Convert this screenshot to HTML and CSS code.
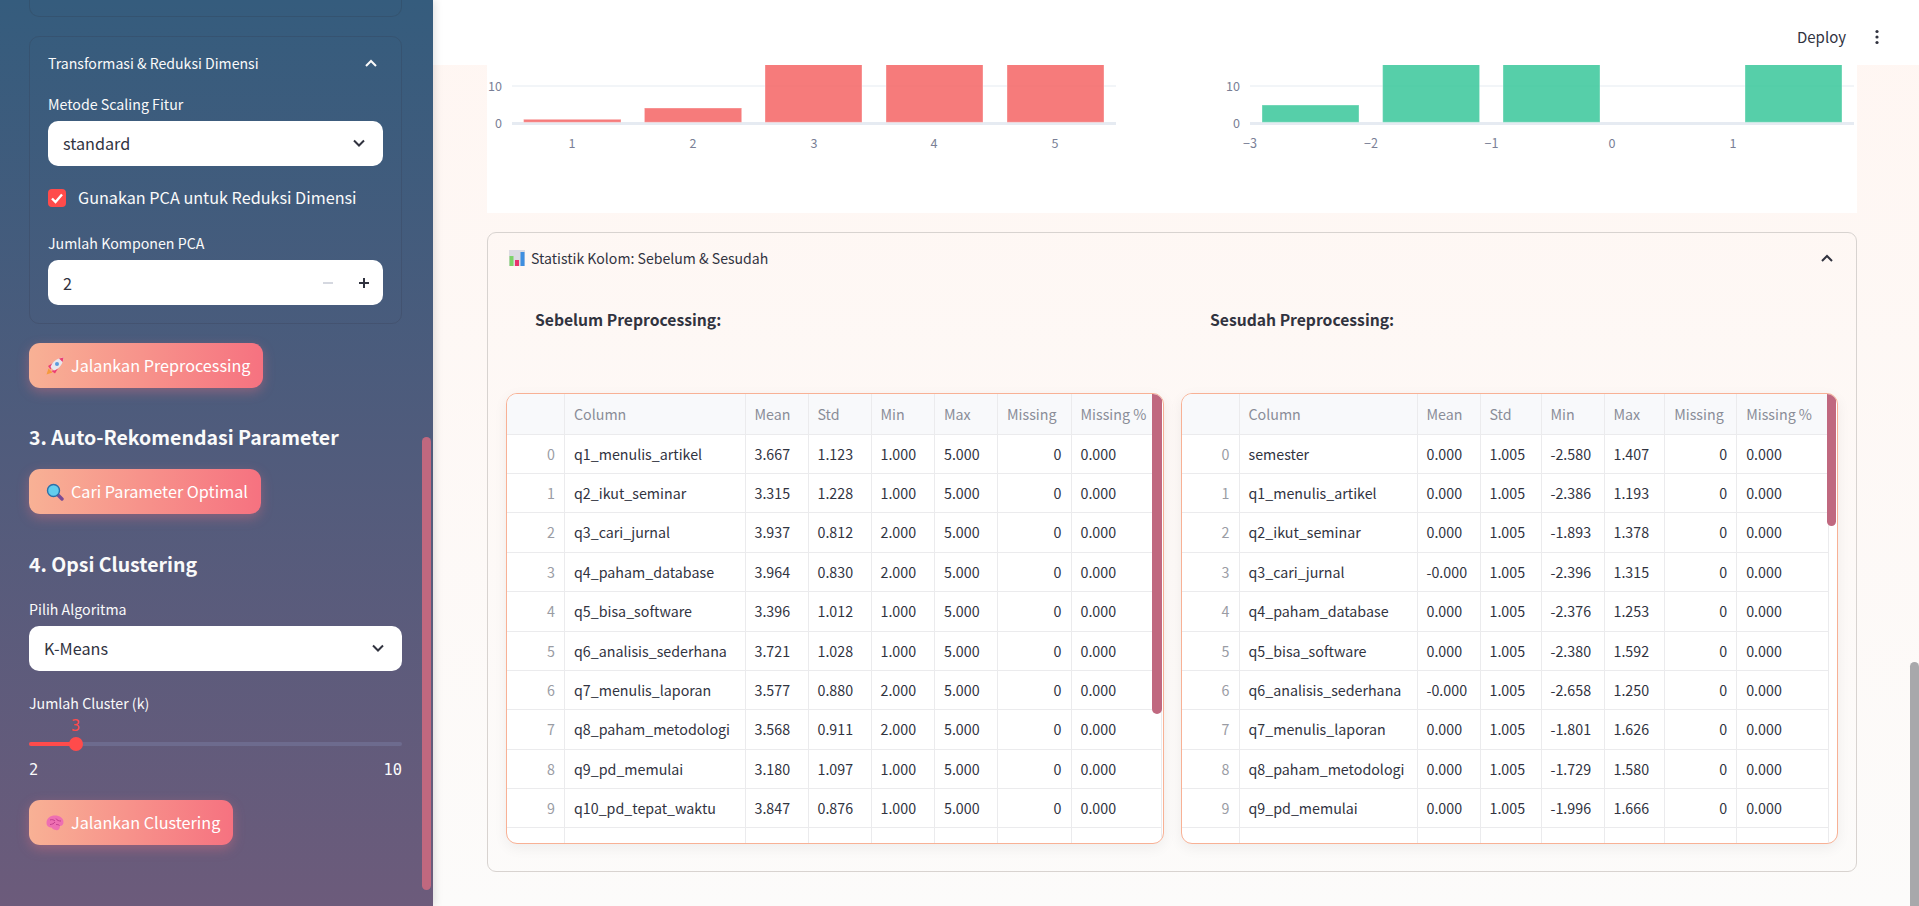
FILE: index.html
```html
<!DOCTYPE html>
<html lang="id">
<head>
  <meta charset="UTF-8" />
  <meta name="viewport" content="width=device-width, initial-scale=1.0" />
  <title>Preprocessing dan Clustering</title>
  <link rel="stylesheet" href="styles.css">
</head>
<body>
  <aside class="sidebar">
    <div class="side-box cut"></div>

    <div class="side-box">
      <div class="box-head">
        <span>Transformasi &amp; Reduksi Dimensi</span>
        <svg class="chev" viewBox="0 0 14 14"><path d="M2 10l5-5 5 5"/></svg>
      </div>
      <label class="field-label">Metode Scaling Fitur</label>
      <div class="select">
        <span>standard</span>
        <svg class="chev" viewBox="0 0 14 14"><path d="M2 4.5l5 5 5-5"/></svg>
      </div>
      <div class="check-row">
        <span class="check">
          <svg viewBox="0 0 18 18"><path d="M4 9.5l3.5 3.5L14 5.5"/></svg>
        </span>
        <span class="check-text">Gunakan PCA untuk Reduksi Dimensi</span>
      </div>
      <label class="field-label pca-label">Jumlah Komponen PCA</label>
      <div class="select number">
        <span>2</span>
        <span class="steps">
          <svg class="step off" viewBox="0 0 10 10"><path d="M0 5h10"/></svg>
          <svg class="step" viewBox="0 0 10 10"><path d="M0 5h10M5 0v10"/></svg>
        </span>
      </div>
    </div>

    <button class="run-btn btn-pre">
      <svg class="emoji" viewBox="0 0 18 18">
        <path d="M0.500 17.500l2-6 4 4z" fill="#f59a3c"/>
        <path d="M2 9l5-3-2.500 6.500zM9 16.500l3-5-6.500 2.500z" fill="#ec3f73"/>
        <path d="M4.500 10C6.500 4.500 11 1 17.500 0.500 17 7 13.500 11.500 8 13.500z" fill="#e9e6ec"/>
        <path d="M13 1.400l4.500-.9-.9 4.500z" fill="#ec3f73"/>
        <circle cx="11" cy="7" r="2" fill="#5b9bdc"/>
      </svg>
      <span>Jalankan Preprocessing</span>
    </button>

    <h3 class="side-title first">3. Auto-Rekomendasi Parameter</h3>
    <button class="run-btn btn-param">
      <svg class="emoji" viewBox="0 0 18 18">
        <path d="M11 11l5 5" stroke="#7a4a94" stroke-width="3.400" stroke-linecap="round"/>
        <circle cx="7.500" cy="7.500" r="6" fill="#62cdee" stroke="#2c6fa8" stroke-width="1.400"/>
      </svg>
      <span>Cari Parameter Optimal</span>
    </button>

    <h3 class="side-title second">4. Opsi Clustering</h3>
    <label class="field-label algo-label">Pilih Algoritma</label>
    <div class="select">
      <span>K-Means</span>
      <svg class="chev" viewBox="0 0 14 14"><path d="M2 4.500l5 5 5-5"/></svg>
    </div>
    <label class="field-label cluster-label">Jumlah Cluster (k)</label>
    <div class="slider-value">3</div>
    <div class="slider">
      <div class="slider-fill"></div>
      <div class="slider-thumb"></div>
    </div>
    <div class="slider-ends"><span>2</span><span>10</span></div>
    <button class="run-btn btn-cluster">
      <svg class="emoji" viewBox="0 0 18 18">
        <path d="M0.500 9c0-5 4-7.500 8.500-7.500s8.500 2.500 8.500 6.500c0 2.500-1.500 4-3.500 4 0 2.500-1.500 5-4 4-2 0-3.500-1-4.500-2.500-2.500 0-5-1.500-5-4.500z" fill="#ee6fb2"/>
        <path d="M4 6c2-1 4 0 5 1M10 4.500c1 2 3 2.500 5 2.500M4 10.500c2 0 4-1 5-2.500M10 10.500c1 0 2.500 0 3.500 1" fill="none" stroke="#c33f8e" stroke-width="1"/>
      </svg>
      <span>Jalankan Clustering</span>
    </button>

    <div class="side-scroll"></div>
  </aside>

  <main class="main">
    <header class="topbar">
      <span class="deploy">Deploy</span>
      <svg class="kebab" viewBox="0 0 4 16">
        <circle cx="2" cy="2.500" r="1.600"/>
        <circle cx="2" cy="8" r="1.600"/>
        <circle cx="2" cy="13.500" r="1.600"/>
      </svg>
    </header>

    <section class="charts">
      <svg class="chart" viewBox="0 0 685 148">
        <path class="grid-line" d="M25 21H629"/>
        <path class="zero-line" d="M25 58.500H629"/>
        <g class="bars-red">
          <rect x="36.600" y="54.300" width="97.400" height="3"/>
          <rect x="157.400" y="43" width="97.300" height="14.300"/>
          <rect x="278" y="-2" width="97" height="59.300"/>
          <rect x="399" y="-2" width="97" height="59.300"/>
          <rect x="520" y="-2" width="97" height="59.300"/>
        </g>
        <g class="tick y-tick">
          <text x="15" y="26">10</text>
          <text x="15" y="63">0</text>
        </g>
        <g class="tick x-tick">
          <text x="85" y="83">1</text>
          <text x="206" y="83">2</text>
          <text x="327" y="83">3</text>
          <text x="447" y="83">4</text>
          <text x="568" y="83">5</text>
        </g>
      </svg>
      <svg class="chart" viewBox="0 0 685 148">
        <path class="grid-line" d="M78 21H682"/>
        <path class="zero-line" d="M78 58.500H682"/>
        <g class="bars-green">
          <rect x="90" y="40" width="97" height="17.300"/>
          <rect x="210.600" y="-2" width="97" height="59.300"/>
          <rect x="331" y="-2" width="97" height="59.300"/>
          <rect x="573" y="-2" width="97" height="59.300"/>
        </g>
        <g class="tick y-tick">
          <text x="68" y="26">10</text>
          <text x="68" y="63">0</text>
        </g>
        <g class="tick x-tick">
          <text x="78" y="83">−3</text>
          <text x="199" y="83">−2</text>
          <text x="319.500" y="83">−1</text>
          <text x="440" y="83">0</text>
          <text x="561" y="83">1</text>
        </g>
      </svg>
    </section>

    <section class="expander">
      <div class="exp-head">
        <svg class="emoji small" viewBox="0 0 16 16">
          <rect x="0" y="0" width="16" height="16" fill="#dcdbe2"/>
          <rect x="0.500" y="6" width="4" height="10" fill="#7ed36a"/>
          <rect x="6" y="10" width="4" height="6" fill="#e8326e"/>
          <rect x="11.500" y="2" width="4" height="14" fill="#3f8fe0"/>
        </svg>
        <span class="exp-title">Statistik Kolom: Sebelum &amp; Sesudah</span>
        <svg class="chev dark" viewBox="0 0 14 14"><path d="M2 10l5-5 5 5"/></svg>
      </div>

      <div class="exp-subheads">
        <h4>Sebelum Preprocessing:</h4>
        <h4>Sesudah Preprocessing:</h4>
      </div>

      <div class="tables">
        <div class="table-box">
          <table class="grid-a">
            <thead>
              <tr><th></th><th>Column</th><th>Mean</th><th>Std</th><th>Min</th><th>Max</th><th>Missing</th><th>Missing %</th></tr>
            </thead>
            <tbody>
              <tr><td class="idx">0</td><td>q1_menulis_artikel</td><td>3.667</td><td>1.123</td><td>1.000</td><td>5.000</td><td class="num">0</td><td>0.000</td></tr>
              <tr><td class="idx">1</td><td>q2_ikut_seminar</td><td>3.315</td><td>1.228</td><td>1.000</td><td>5.000</td><td class="num">0</td><td>0.000</td></tr>
              <tr><td class="idx">2</td><td>q3_cari_jurnal</td><td>3.937</td><td>0.812</td><td>2.000</td><td>5.000</td><td class="num">0</td><td>0.000</td></tr>
              <tr><td class="idx">3</td><td>q4_paham_database</td><td>3.964</td><td>0.830</td><td>2.000</td><td>5.000</td><td class="num">0</td><td>0.000</td></tr>
              <tr><td class="idx">4</td><td>q5_bisa_software</td><td>3.396</td><td>1.012</td><td>1.000</td><td>5.000</td><td class="num">0</td><td>0.000</td></tr>
              <tr><td class="idx">5</td><td>q6_analisis_sederhana</td><td>3.721</td><td>1.028</td><td>1.000</td><td>5.000</td><td class="num">0</td><td>0.000</td></tr>
              <tr><td class="idx">6</td><td>q7_menulis_laporan</td><td>3.577</td><td>0.880</td><td>2.000</td><td>5.000</td><td class="num">0</td><td>0.000</td></tr>
              <tr><td class="idx">7</td><td>q8_paham_metodologi</td><td>3.568</td><td>0.911</td><td>2.000</td><td>5.000</td><td class="num">0</td><td>0.000</td></tr>
              <tr><td class="idx">8</td><td>q9_pd_memulai</td><td>3.180</td><td>1.097</td><td>1.000</td><td>5.000</td><td class="num">0</td><td>0.000</td></tr>
              <tr><td class="idx">9</td><td>q10_pd_tepat_waktu</td><td>3.847</td><td>0.876</td><td>1.000</td><td>5.000</td><td class="num">0</td><td>0.000</td></tr>
              <tr><td></td><td></td><td></td><td></td><td></td><td></td><td></td><td></td></tr>
            </tbody>
          </table>
          <div class="table-scroll long"></div>
        </div>

        <div class="table-box">
          <table class="grid-b">
            <thead>
              <tr><th></th><th>Column</th><th>Mean</th><th>Std</th><th>Min</th><th>Max</th><th>Missing</th><th>Missing %</th></tr>
            </thead>
            <tbody>
              <tr><td class="idx">0</td><td>semester</td><td>0.000</td><td>1.005</td><td>-2.580</td><td>1.407</td><td class="num">0</td><td>0.000</td></tr>
              <tr><td class="idx">1</td><td>q1_menulis_artikel</td><td>0.000</td><td>1.005</td><td>-2.386</td><td>1.193</td><td class="num">0</td><td>0.000</td></tr>
              <tr><td class="idx">2</td><td>q2_ikut_seminar</td><td>0.000</td><td>1.005</td><td>-1.893</td><td>1.378</td><td class="num">0</td><td>0.000</td></tr>
              <tr><td class="idx">3</td><td>q3_cari_jurnal</td><td>-0.000</td><td>1.005</td><td>-2.396</td><td>1.315</td><td class="num">0</td><td>0.000</td></tr>
              <tr><td class="idx">4</td><td>q4_paham_database</td><td>0.000</td><td>1.005</td><td>-2.376</td><td>1.253</td><td class="num">0</td><td>0.000</td></tr>
              <tr><td class="idx">5</td><td>q5_bisa_software</td><td>0.000</td><td>1.005</td><td>-2.380</td><td>1.592</td><td class="num">0</td><td>0.000</td></tr>
              <tr><td class="idx">6</td><td>q6_analisis_sederhana</td><td>-0.000</td><td>1.005</td><td>-2.658</td><td>1.250</td><td class="num">0</td><td>0.000</td></tr>
              <tr><td class="idx">7</td><td>q7_menulis_laporan</td><td>0.000</td><td>1.005</td><td>-1.801</td><td>1.626</td><td class="num">0</td><td>0.000</td></tr>
              <tr><td class="idx">8</td><td>q8_paham_metodologi</td><td>0.000</td><td>1.005</td><td>-1.729</td><td>1.580</td><td class="num">0</td><td>0.000</td></tr>
              <tr><td class="idx">9</td><td>q9_pd_memulai</td><td>0.000</td><td>1.005</td><td>-1.996</td><td>1.666</td><td class="num">0</td><td>0.000</td></tr>
              <tr><td></td><td></td><td></td><td></td><td></td><td></td><td></td><td></td></tr>
            </tbody>
          </table>
          <div class="table-scroll short"></div>
        </div>
      </div>
    </section>

    <div class="page-scroll"></div>
  </main>
</body>
</html>
```

FILE: styles.css
```css
* {
  box-sizing: border-box;
}
html, body {
  height: 100%;
}
body {
  margin: 0;
  display: flex;
  height: 906px;
  overflow: hidden;
  font-family: "Noto Sans CJK SC", "Noto Sans", sans-serif;
  color: #31333f;
}

/* sidebar */
.sidebar {
  position: relative;
  z-index: 2;
  flex: 0 0 433px;
  height: 906px;
  padding: 0 31px 0 29px;
  background: linear-gradient(180deg, #355c7d, #6c5b7b);
  box-shadow: 2px 0 8px rgba(0, 0, 0, 0.12);
  color: #fafafa;
}
.side-box {
  width: 373px;
  height: 288px;
  margin-top: 19px;
  padding: 13px 18px 0;
  border: 1px solid rgba(49, 51, 63, 0.2);
  border-radius: 10px;
}
.side-box.cut {
  height: 17px;
  margin-top: 0;
  padding: 0;
  border-top: none;
  border-radius: 0 0 10px 10px;
}
.box-head {
  display: flex;
  justify-content: space-between;
  align-items: center;
  height: 26px;
  padding-right: 5px;
  margin-bottom: 18px;
  font-size: 14.100px;
  line-height: 26px;
}
.chev {
  width: 14px;
  height: 14px;
  fill: none;
  stroke: #fafafa;
  stroke-width: 2;
}
.select .chev {
  stroke: #31333f;
}
.chev.dark {
  stroke: #31333f;
}
.field-label {
  display: block;
  height: 20px;
  margin-bottom: 7px;
  font-size: 14.200px;
  line-height: 20px;
}
.pca-label {
  margin-top: 26px;
}
.algo-label {
  margin-top: 20px;
}
.cluster-label {
  margin-top: 22px;
  margin-bottom: 0;
}
.select {
  display: flex;
  justify-content: space-between;
  align-items: center;
  height: 45px;
  padding: 0 17px 1px 15px;
  border-radius: 10px;
  background: #fff;
  color: #31333f;
  font-size: 16.200px;
}
.sidebar > .select {
  width: 373px;
}
.number {
  padding-right: 14px;
  padding-bottom: 0;
}
.steps {
  display: flex;
  gap: 26px;
  align-items: center;
}
.step {
  width: 10px;
  height: 10px;
  fill: none;
  stroke: #31333f;
  stroke-width: 2;
}
.step.off {
  stroke: #d5d8e0;
}
.check-row {
  display: flex;
  align-items: center;
  gap: 12px;
  height: 18px;
  margin-top: 23px;
  font-size: 16.200px;
  line-height: 18px;
  white-space: nowrap;
}
.check-text {
  padding-bottom: 2px;
}
.check {
  flex: 0 0 18px;
  width: 18px;
  height: 18px;
  border-radius: 4px;
  background: #ff4b4b;
}
.check svg {
  display: block;
  fill: none;
  stroke: #fff;
  stroke-width: 2.400;
}
.run-btn {
  display: flex;
  align-items: center;
  gap: 7px;
  height: 45px;
  padding: 0 0 0 17px;
  border: none;
  border-radius: 11px;
  background: linear-gradient(90deg, #f8b195, #f67280);
  box-shadow: 0 4px 12px rgba(246, 114, 128, 0.35);
  color: #fff;
  font-family: inherit;
  font-size: 16.200px;
  white-space: nowrap;
}
.run-btn span {
  padding-bottom: 2px;
}
.btn-pre {
  width: 234px;
  margin-top: 19px;
}
.btn-param {
  width: 232px;
  margin-top: 17px;
}
.btn-cluster {
  width: 204px;
  margin-top: 20px;
}
.emoji {
  flex: 0 0 18px;
  width: 18px;
  height: 18px;
}
.emoji.small {
  flex: 0 0 16px;
  width: 16px;
  height: 16px;
}
.side-title {
  height: 30px;
  margin: 0;
  font-size: 19.500px;
  font-weight: 600;
  line-height: 30px;
}
.side-title.first {
  margin-top: 34px;
}
.side-title.second {
  margin-top: 35px;
}
.slider-value {
  height: 20px;
  margin-top: 3px;
  padding-left: 42px;
  color: #ff4b4b;
  font-family: "DejaVu Sans Mono", monospace;
  font-size: 15.400px;
  line-height: 20px;
}
.slider {
  position: relative;
  width: 373px;
  height: 4px;
  margin-top: 6px;
  margin-bottom: 5px;
  border-radius: 2px;
  background: #6d6b8e;
}
.slider-fill {
  width: 47px;
  height: 4px;
  border-radius: 2px;
  background: #ff4b4b;
}
.slider-thumb {
  position: absolute;
  left: 40px;
  top: -5px;
  width: 14px;
  height: 14px;
  border-radius: 50%;
  background: #ff4b4b;
}
.slider-ends {
  display: flex;
  justify-content: space-between;
  width: 373px;
  height: 20px;
  margin-top: 14px;
  font-family: "DejaVu Sans Mono", monospace;
  font-size: 15.400px;
  line-height: 20px;
}
.side-scroll {
  position: absolute;
  left: 422px;
  top: 437px;
  width: 9px;
  height: 453px;
  border-radius: 5px;
  background: #c0687f;
}

/* main area */
.main {
  position: relative;
  flex: 1;
  height: 906px;
  padding: 65px 62px 0 54px;
  background: linear-gradient(180deg, #fff6f2, #fcfbfa);
}
.topbar {
  position: absolute;
  left: 0;
  right: 0;
  top: 0;
  display: flex;
  justify-content: flex-end;
  align-items: center;
  height: 65px;
  padding: 8px 40px 0 0;
  background: #fff;
}
.deploy {
  margin-right: 29px;
  font-size: 15px;
}
.kebab {
  width: 4px;
  height: 16px;
  fill: #31333f;
}
.charts {
  display: flex;
  height: 148px;
  background: #fff;
}
.chart {
  display: block;
  width: 685px;
  height: 148px;
}
.grid-line {
  fill: none;
  stroke: #e6ebf2;
  stroke-width: 1.200;
}
.zero-line {
  fill: none;
  stroke: #e6ebf2;
  stroke-width: 3;
}
.bars-red rect {
  fill: rgba(244, 100, 100, 0.85);
  stroke: rgba(255, 255, 255, 0.35);
}
.bars-green rect {
  fill: rgba(56, 199, 154, 0.85);
  stroke: rgba(255, 255, 255, 0.35);
}
.tick text {
  fill: #7a7f96;
  font-size: 12.600px;
}
.y-tick text {
  text-anchor: end;
}
.x-tick text {
  text-anchor: middle;
}
.expander {
  width: 1370px;
  height: 640px;
  margin-top: 19px;
  padding: 0 18px;
  border: 1px solid #d8d3d0;
  border-radius: 9px;
}
.exp-head {
  display: flex;
  align-items: center;
  gap: 6px;
  height: 52px;
  padding: 0 4px 2px 3px;
}
.exp-title {
  flex: 1;
  font-size: 14.100px;
}
.exp-subheads {
  display: flex;
  height: 70px;
  padding-bottom: 2px;
  align-items: center;
}
.exp-subheads h4 {
  flex: 0 0 675px;
  margin: 0;
  padding-left: 29px;
  font-size: 15.700px;
  font-weight: 600;
}
.tables {
  display: flex;
  gap: 17px;
  margin-top: 38.300px;
}
.table-box {
  position: relative;
  width: 658px;
  height: 451px;
  overflow: hidden;
  border: 1px solid #f8b195;
  border-radius: 11px;
  background: #fff;
  box-shadow: 0 4px 14px rgba(0, 0, 0, 0.06);
}
table {
  display: grid;
  grid-template-rows: 40.400px;
  grid-auto-rows: 39.375px;
  margin: 0;
  border-spacing: 0;
  font-size: 14.250px;
}
thead, tbody, tr {
  display: contents;
}
.grid-a {
  grid-template-columns: 58px 180.500px 63px 63px 63.500px 63px 73.500px 90px;
}
.grid-b {
  grid-template-columns: 58px 178px 63px 61px 63px 60.700px 72px 91.700px;
}
th, td {
  padding: 0 9px;
  overflow: hidden;
  border-right: 1.200px solid #ebebed;
  border-bottom: 1.200px solid #ebebed;
  line-height: 38px;
  text-align: left;
  white-space: nowrap;
}
th {
  background: #f8f9fb;
  color: #8a8d98;
  font-weight: 400;
  line-height: 40px;
}
.idx {
  color: #9a9ca4;
  text-align: right;
}
.num {
  text-align: right;
}
.table-scroll {
  position: absolute;
  top: 0;
  width: 9.500px;
  border-radius: 0 0 5px 5px;
  background: #c0687f;
}
.table-scroll.long {
  right: 1px;
  height: 320px;
}
.table-scroll.short {
  right: 1px;
  height: 132px;
}
.page-scroll {
  position: absolute;
  right: 0;
  top: 662px;
  width: 9px;
  height: 244px;
  border-radius: 5px 5px 0 0;
  background: #a8a8ab;
}
```
